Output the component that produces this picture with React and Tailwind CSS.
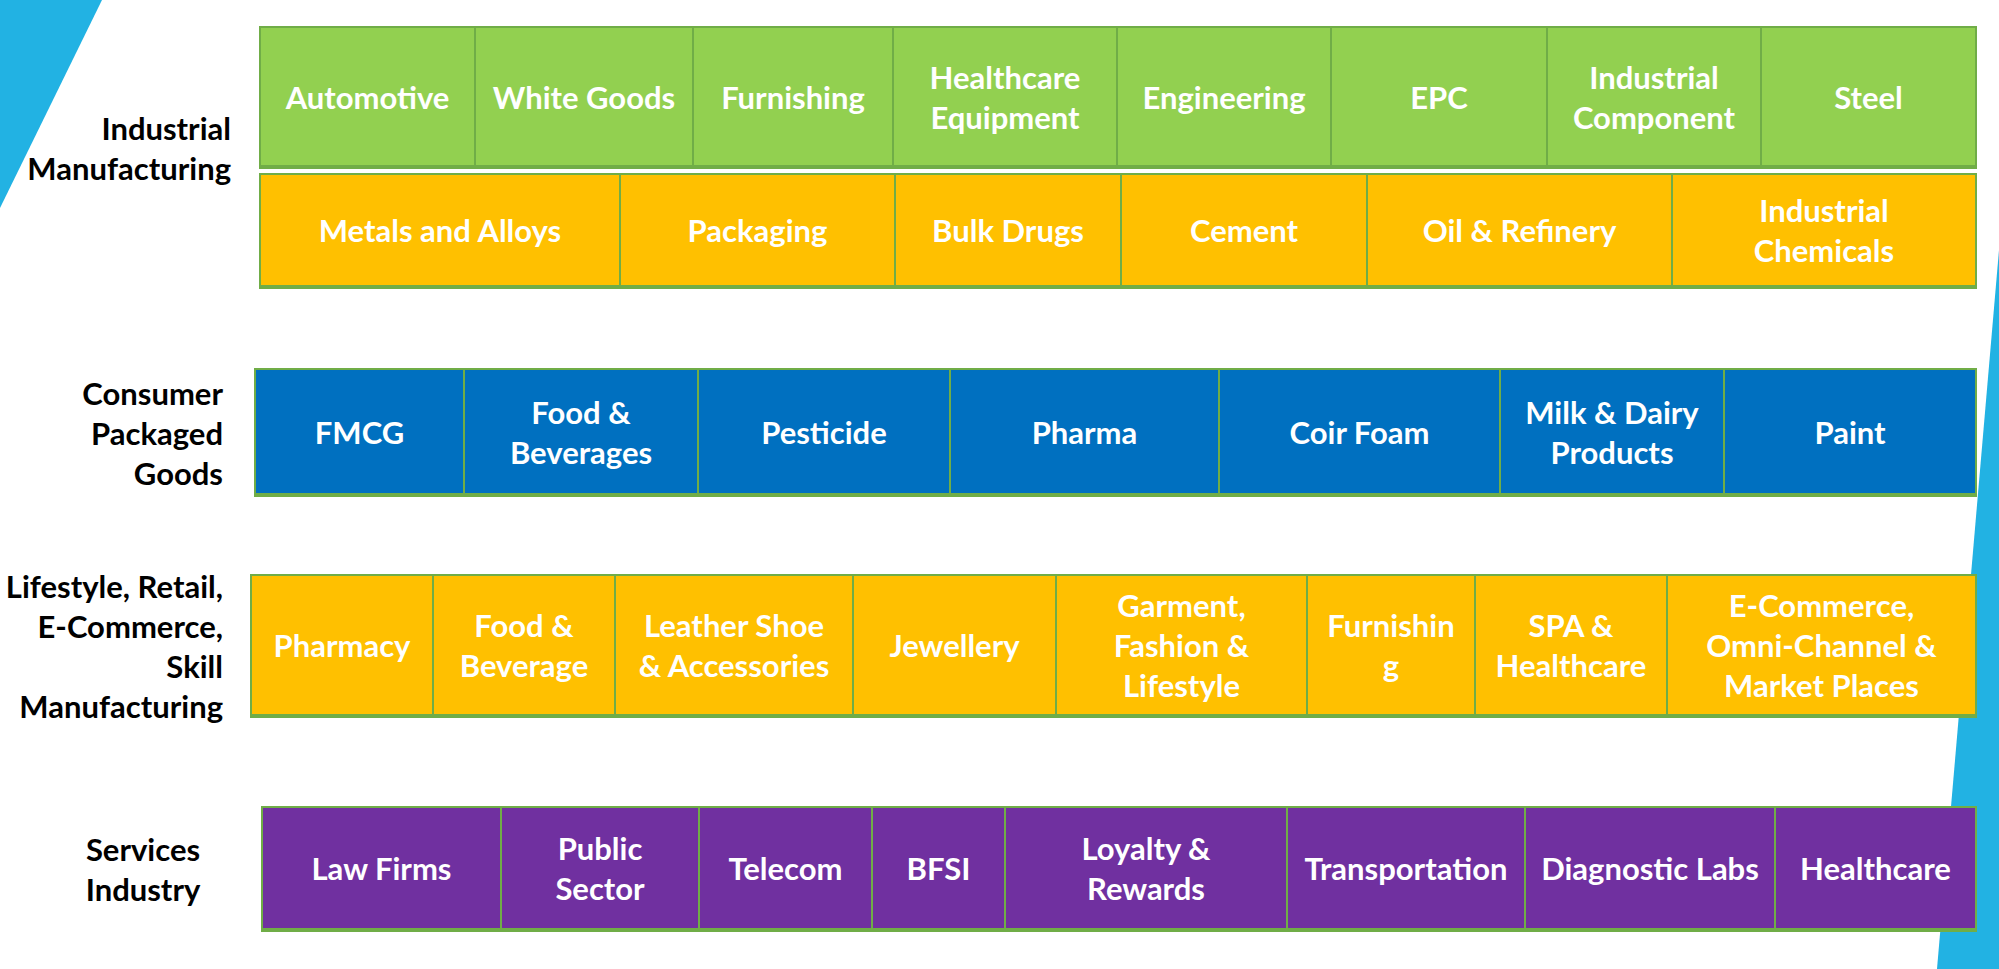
import React from "react";

const font = { fontFamily: "Lato, 'Open Sans', sans-serif" };

const sections = [
  {
    label: ["Industrial", "Manufacturing"],
    labelBox: "w-[231px] text-right pt-[82px]",
    gap: "ml-[28px]",
    tables: [
      {
        box: "h-[143px] bg-[#92d050]",
        cells: [
          { w: "w-[215px]", t: ["Automotive"] },
          { w: "w-[218px]", t: ["White Goods"] },
          { w: "w-[200px]", t: ["Furnishing"] },
          { w: "w-[224px]", t: ["Healthcare", "Equipment"] },
          { w: "w-[214px]", t: ["Engineering"] },
          { w: "w-[216px]", t: ["EPC"] },
          { w: "w-[214px]", t: ["Industrial", "Component"] },
          { w: "flex-1", t: ["Steel"] },
        ],
      },
      {
        box: "h-[116px] bg-[#ffc000] mt-[4px]",
        cells: [
          { w: "w-[360px]", t: ["Metals and Alloys"] },
          { w: "w-[275px]", t: ["Packaging"] },
          { w: "w-[226px]", t: ["Bulk Drugs"] },
          { w: "w-[246px]", t: ["Cement"] },
          { w: "w-[305px]", t: ["Oil & Refinery"] },
          { w: "flex-1", t: ["Industrial", "Chemicals"] },
        ],
      },
    ],
  },
  {
    label: ["Consumer", "Packaged", "Goods"],
    labelBox: "w-[223px] text-right self-center",
    gap: "ml-[31px]",
    mt: "mt-[79px]",
    tables: [
      {
        box: "h-[129px] bg-[#0070c0]",
        cells: [
          { w: "w-[209px]", t: ["FMCG"] },
          { w: "w-[234px]", t: ["Food &", "Beverages"] },
          { w: "w-[252px]", t: ["Pesticide"] },
          { w: "w-[269px]", t: ["Pharma"] },
          { w: "w-[281px]", t: ["Coir Foam"] },
          { w: "w-[224px]", t: ["Milk & Dairy", "Products"] },
          { w: "flex-1", t: ["Paint"] },
        ],
      },
    ],
  },
  {
    label: ["Lifestyle, Retail,", "E-Commerce,", "Skill", "Manufacturing"],
    labelBox: "w-[223px] text-right self-center -my-[8px]",
    gap: "ml-[27px]",
    mt: "mt-[77px]",
    tables: [
      {
        box: "h-[144px] bg-[#ffc000]",
        cells: [
          { w: "w-[182px]", t: ["Pharmacy"] },
          { w: "w-[182px]", t: ["Food &", "Beverage"] },
          { w: "w-[238px]", t: ["Leather Shoe", "& Accessories"] },
          { w: "w-[203px]", t: ["Jewellery"] },
          { w: "w-[251px]", t: ["Garment,", "Fashion &", "Lifestyle"] },
          { w: "w-[168px]", t: ["Furnishin", "g"] },
          { w: "w-[192px]", t: ["SPA &", "Healthcare"] },
          { w: "flex-1", t: ["E-Commerce,", "Omni-Channel &", "Market Places"] },
        ],
      },
    ],
  },
  {
    label: ["Services", "Industry"],
    labelBox: "w-[166px] ml-[60px] text-center self-center",
    gap: "ml-[35px]",
    mt: "mt-[88px]",
    tables: [
      {
        box: "h-[126px] bg-[#7030a0]",
        cells: [
          { w: "w-[239px]", t: ["Law Firms"] },
          { w: "w-[198px]", t: ["Public", "Sector"] },
          { w: "w-[173px]", t: ["Telecom"] },
          { w: "w-[133px]", t: ["BFSI"] },
          { w: "w-[282px]", t: ["Loyalty &", "Rewards"] },
          { w: "w-[238px]", t: ["Transportation"] },
          { w: "w-[250px]", t: ["Diagnostic Labs"] },
          { w: "flex-1", t: ["Healthcare"] },
        ],
      },
    ],
  },
];

function Table({ box, cells }) {
  return (
    <div className={"flex border-2 border-b-4 border-[#70ad47] " + box}>
      {cells.map((c, i) => (
        <div
          key={i}
          className={
            "flex flex-col items-center justify-center text-center text-white font-bold text-[31px] leading-[40px] " +
            c.w +
            (i < cells.length - 1 ? " border-r-2 border-[#70ad47]" : "")
          }
        >
          {c.t.map((line, j) => (
            <span key={j} className="whitespace-nowrap">{line}</span>
          ))}
        </div>
      ))}
    </div>
  );
}

export default function App() {
  return (
    <div className="relative w-[1999px] h-[969px] bg-white overflow-hidden" style={font}>
      <svg className="absolute left-0 top-0" width="1999" height="969" viewBox="0 0 1999 969">
        <polygon points="0,0 102,0 0,208" fill="#22b2e3" />
        <polygon points="1999,250 1999,969 1937,969" fill="#22b2e3" />
      </svg>

      <div className="relative flex flex-col pt-[26px] pr-[22px]">
        {sections.map((s, i) => (
          <div key={i} className={"flex " + (s.mt || "")}>
            <div className={"flex-none flex flex-col text-black font-bold text-[31px] leading-[40px] " + s.labelBox}>
              {s.label.map((l, j) => (
                <span key={j} className="whitespace-nowrap">{l}</span>
              ))}
            </div>
            <div className={"flex-1 flex flex-col " + s.gap}>
              {s.tables.map((t, j) => (
                <Table key={j} {...t} />
              ))}
            </div>
          </div>
        ))}
      </div>
    </div>
  );
}
